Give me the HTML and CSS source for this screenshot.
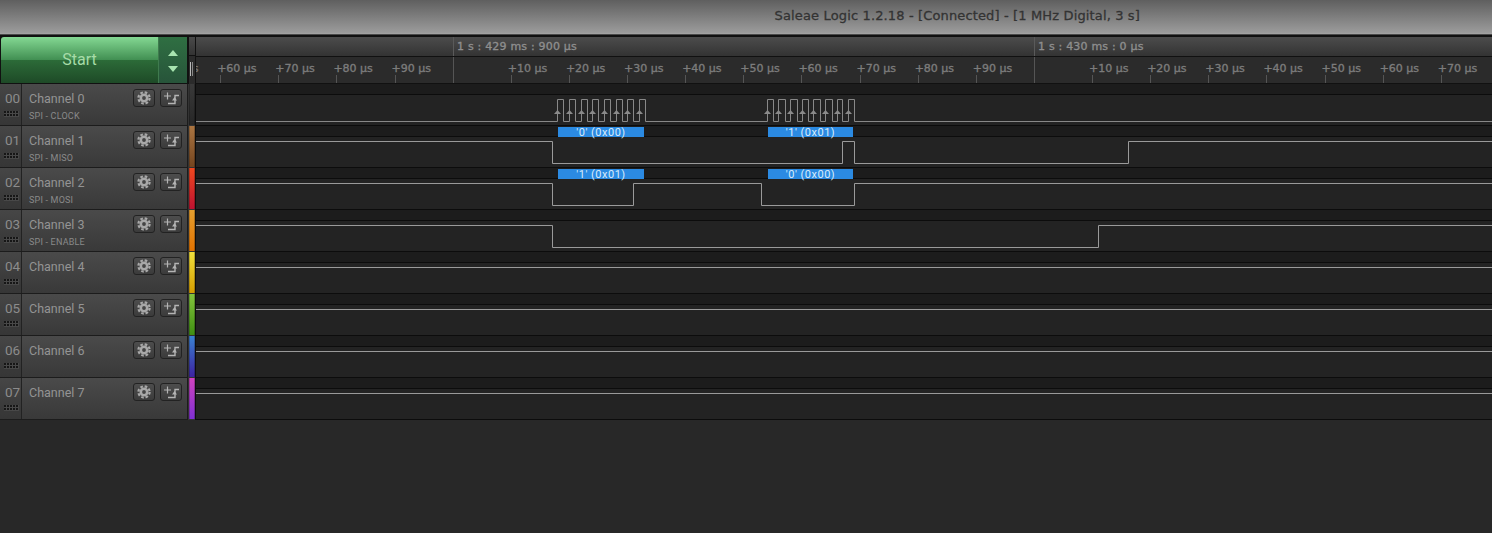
FILE: index.html
```html
<!DOCTYPE html>
<html>
<head>
<meta charset="utf-8">
<title>Saleae Logic 1.2.18</title>
<link rel="stylesheet" href="styles.css">
</head>
<body>

<svg class="defs">
  <symbol id="gear" viewBox="0 0 14 14">
    <circle cx="7" cy="7" r="3.2" fill="none" stroke="#a8a8a8" stroke-width="2.6"/>
    <circle cx="7" cy="7" r="5.6" fill="none" stroke="#a8a8a8" stroke-width="2.2" stroke-dasharray="2.6 1.8"/>
  </symbol>
  <symbol id="trig" viewBox="0 0 18 14">
    <path d="M2 5H9M5.5 1.5V8.5" fill="none" stroke="#b4b4b4" stroke-width="1.2"/>
    <path d="M6 12.5H13V4.5H17" fill="none" stroke="#b4b4b4" stroke-width="1.4"/>
    <path d="M12.5 6L15 9.5H10z" fill="#b4b4b4"/>
  </symbol>
</svg>

<div class="titlebar">Saleae Logic 1.2.18 - [Connected] - [1 MHz Digital, 3 s]</div>

<div class="top">
  <div class="start">
    <div class="start_btn">Start</div>
    <div class="start_arrows"><span class="up"></span><span class="down"></span></div>
  </div>
  <div class="top_strip"><div class="grip"></div></div>
  <div class="ruler">
    <div class="ruler_major">
      <div class="major first">1 s : 429 ms : 900 µs</div>
      <div class="major">1 s : 430 ms : 0 µs</div>
    </div>
    <div class="ruler_minor">
      <div class="tick">+50 µs</div>
      <div class="tick">+60 µs</div>
      <div class="tick">+70 µs</div>
      <div class="tick">+80 µs</div>
      <div class="tick">+90 µs</div>
      <div class="tick big"></div>
      <div class="tick">+10 µs</div>
      <div class="tick">+20 µs</div>
      <div class="tick">+30 µs</div>
      <div class="tick">+40 µs</div>
      <div class="tick">+50 µs</div>
      <div class="tick">+60 µs</div>
      <div class="tick">+70 µs</div>
      <div class="tick">+80 µs</div>
      <div class="tick">+90 µs</div>
      <div class="tick big"></div>
      <div class="tick">+10 µs</div>
      <div class="tick">+20 µs</div>
      <div class="tick">+30 µs</div>
      <div class="tick">+40 µs</div>
      <div class="tick">+50 µs</div>
      <div class="tick">+60 µs</div>
      <div class="tick">+70 µs</div>
    </div>
  </div>
</div>

<div class="row">
  <div class="chan">
    <div class="num">00<div class="dots"></div></div>
    <div class="info"><div class="name">Channel 0</div><div class="sub">SPI - CLOCK</div></div>
    <div class="btn"><svg class="gear"><use href="#gear"/></svg></div>
    <div class="btn"><svg class="trig"><use href="#trig"/></svg></div>
  </div>
  <div class="gutter"><div class="strip c0"></div></div>
  <div class="trace">
    <svg class="wave" width="1296" height="41">
      <path class="sig dim" d="M0 37.5H361.5V15.5H367.5V37.5H373.5V15.5H379.5V37.5H385.5V15.5H391.5V37.5H396.5V15.5H402.5V37.5H408.5V15.5H414.5V37.5H420.5V15.5H426.5V37.5H431.5V15.5H437.5V37.5H443.5V15.5H449.5V37.5H571.5V15.5H577.5V37.5H582.5V15.5H589.5V37.5H594.5V15.5H601.5V37.5H606.5V15.5H612.5V37.5H617.5V15.5H624.5V37.5H629.5V15.5H636.5V37.5H641.5V15.5H646.5V37.5H652.5V15.5H658.5V37.5H1296"/>
      <path class="edge" d="M361.5 26l3.5 4h-7zM373.5 26l3.5 4h-7zM385.5 26l3.5 4h-7zM396.5 26l3.5 4h-7zM408.5 26l3.5 4h-7zM420.5 26l3.5 4h-7zM431.5 26l3.5 4h-7zM443.5 26l3.5 4h-7zM571.5 26l3.5 4h-7zM582.5 26l3.5 4h-7zM594.5 26l3.5 4h-7zM606.5 26l3.5 4h-7zM617.5 26l3.5 4h-7zM629.5 26l3.5 4h-7zM641.5 26l3.5 4h-7zM652.5 26l3.5 4h-7z"/>
    </svg>
  </div>
</div>

<div class="row">
  <div class="chan">
    <div class="num">01<div class="dots"></div></div>
    <div class="info"><div class="name">Channel 1</div><div class="sub">SPI - MISO</div></div>
    <div class="btn"><svg class="gear"><use href="#gear"/></svg></div>
    <div class="btn"><svg class="trig"><use href="#trig"/></svg></div>
  </div>
  <div class="gutter"><div class="strip c1"></div></div>
  <div class="trace">
    <svg class="wave" width="1296" height="41">
      <rect class="bubble" x="362" y="1" width="86" height="10"/>
      <text class="bubble_text" x="405" y="9.5">'0' (0x00)</text>
      <rect class="bubble" x="572" y="1" width="85" height="10"/>
      <text class="bubble_text" x="614.5" y="9.5">'1' (0x01)</text>
      <path class="sig" d="M0 15.5H356.5V37.5H646.5V15.5H658.5V37.5H932.5V15.5H1296"/>
    </svg>
  </div>
</div>

<div class="row">
  <div class="chan">
    <div class="num">02<div class="dots"></div></div>
    <div class="info"><div class="name">Channel 2</div><div class="sub">SPI - MOSI</div></div>
    <div class="btn"><svg class="gear"><use href="#gear"/></svg></div>
    <div class="btn"><svg class="trig"><use href="#trig"/></svg></div>
  </div>
  <div class="gutter"><div class="strip c2"></div></div>
  <div class="trace">
    <svg class="wave" width="1296" height="41">
      <rect class="bubble" x="362" y="1" width="86" height="10"/>
      <text class="bubble_text" x="405" y="9.5">'1' (0x01)</text>
      <rect class="bubble" x="572" y="1" width="85" height="10"/>
      <text class="bubble_text" x="614.5" y="9.5">'0' (0x00)</text>
      <path class="sig" d="M0 15.5H356.5V37.5H437.5V15.5H565.5V37.5H658.5V15.5H1296"/>
    </svg>
  </div>
</div>

<div class="row">
  <div class="chan">
    <div class="num">03<div class="dots"></div></div>
    <div class="info"><div class="name">Channel 3</div><div class="sub">SPI - ENABLE</div></div>
    <div class="btn"><svg class="gear"><use href="#gear"/></svg></div>
    <div class="btn"><svg class="trig"><use href="#trig"/></svg></div>
  </div>
  <div class="gutter"><div class="strip c3"></div></div>
  <div class="trace">
    <svg class="wave" width="1296" height="41">
      <path class="sig" d="M0 15.5H356.5V37.5H902.5V15.5H1296"/>
    </svg>
  </div>
</div>

<div class="row">
  <div class="chan">
    <div class="num">04<div class="dots"></div></div>
    <div class="info"><div class="name">Channel 4</div></div>
    <div class="btn"><svg class="gear"><use href="#gear"/></svg></div>
    <div class="btn"><svg class="trig"><use href="#trig"/></svg></div>
  </div>
  <div class="gutter"><div class="strip c4"></div></div>
  <div class="trace">
    <svg class="wave" width="1296" height="41"><path class="sig" d="M0 15.5H1296"/></svg>
  </div>
</div>

<div class="row">
  <div class="chan">
    <div class="num">05<div class="dots"></div></div>
    <div class="info"><div class="name">Channel 5</div></div>
    <div class="btn"><svg class="gear"><use href="#gear"/></svg></div>
    <div class="btn"><svg class="trig"><use href="#trig"/></svg></div>
  </div>
  <div class="gutter"><div class="strip c5"></div></div>
  <div class="trace">
    <svg class="wave" width="1296" height="41"><path class="sig" d="M0 15.5H1296"/></svg>
  </div>
</div>

<div class="row">
  <div class="chan">
    <div class="num">06<div class="dots"></div></div>
    <div class="info"><div class="name">Channel 6</div></div>
    <div class="btn"><svg class="gear"><use href="#gear"/></svg></div>
    <div class="btn"><svg class="trig"><use href="#trig"/></svg></div>
  </div>
  <div class="gutter"><div class="strip c6"></div></div>
  <div class="trace">
    <svg class="wave" width="1296" height="41"><path class="sig" d="M0 15.5H1296"/></svg>
  </div>
</div>

<div class="row">
  <div class="chan">
    <div class="num">07<div class="dots"></div></div>
    <div class="info"><div class="name">Channel 7</div></div>
    <div class="btn"><svg class="gear"><use href="#gear"/></svg></div>
    <div class="btn"><svg class="trig"><use href="#trig"/></svg></div>
  </div>
  <div class="gutter"><div class="strip c7"></div></div>
  <div class="trace">
    <svg class="wave" width="1296" height="41"><path class="sig" d="M0 15.5H1296"/></svg>
  </div>
</div>

</body>
</html>
```

FILE: styles.css
```css
html, body { margin: 0; padding: 0; height: 533px; overflow: hidden; background-color: #282828; }
body { font-family: Roboto, sans-serif; }
.defs { display: block; width: 0; height: 0; }

.titlebar { height: 34px; box-sizing: border-box; padding: 7px 352px 0 0; text-align: right; font-family: "DejaVu Sans", sans-serif; font-size: 13px; letter-spacing: 0.14px; line-height: 17px; color: #333; -webkit-text-stroke: 0.3px #333; background: linear-gradient(#5f5f5f, #9c9c9c); border-bottom: 1px solid #a2a2a2; }

.top { display: grid; grid-template-columns: 188px 8px 1296px; height: 50px; box-sizing: border-box; padding-top: 2px; border-top: 1px solid #4a4a4a; background-color: #111; }
.start { display: flex; border-bottom: 1px solid #111; }
.start_btn { width: 157px; margin-left: 1px; box-sizing: border-box; border-radius: 3px 0 0 0; text-align: center; font-size: 16px; line-height: 46px; color: #a6dba8; background: linear-gradient(#84d893 0, #418f52 50%, #2c6b38 50%, #1e4a27 100%); }
.start_arrows { width: 29px; display: flex; flex-direction: column; align-items: center; gap: 10px; padding-top: 13px; box-sizing: border-box; background: linear-gradient(#2f6f42, #27543a); border-left: 1px solid #3f7a4e; }
.up { width: 0; height: 0; border: 5px solid transparent; border-top: 0; border-bottom: 6px solid #a8e4b0; }
.down { width: 0; height: 0; border: 5px solid transparent; border-bottom: 0; border-top: 6px solid #a8e4b0; }

.top_strip { margin-left: 1px; width: 6px; background: linear-gradient(#4a4a4a, #333 38%, #111 38%, #111 40%, #2b2b2b 40%); }
.grip { width: 3px; height: 14px; margin: 25px 0 0 1px; border-left: 1px solid #bbb; border-right: 1px solid #888; box-sizing: border-box; }

.ruler { overflow: hidden; border-left: 1px solid #111; margin-left: -1px; font-family: "DejaVu Sans", sans-serif; font-size: 11px; color: #7c7c7c; -webkit-text-stroke: 0.35px #7c7c7c; }
.ruler_major { display: flex; height: 19px; padding-left: 257px; background: linear-gradient(#4c4c4c, #333); border-bottom: 1px solid #111; }
.major { flex: 0 0 577px; padding: 2px 0 0 3px; line-height: 15px; letter-spacing: 0.2px; color: #8e8e8e; -webkit-text-stroke: 0.35px #8e8e8e; border-left: 1px solid #5a5a5a; }
.ruler_minor { display: flex; height: 27px; box-sizing: border-box; margin-left: -34px; background-color: #2b2b2b; border-bottom: 1px solid #111; }
.tick { flex: 0 0 58.14px; line-height: 24px; white-space: nowrap; text-indent: -3px; background: linear-gradient(#555, #555) left bottom / 1px 8px no-repeat; }
.big { background-size: 1px 100%; }

.row { display: grid; grid-template-columns: 188px 8px 1296px; height: 42px; background-color: #333; }

.chan { display: flex; align-items: flex-start; box-sizing: border-box; border-bottom: 1px solid #1c1c1c; border-right: 1px solid #1c1c1c; background: linear-gradient(#4a4a4a, #393939); }
.num { width: 22px; height: 41px; box-sizing: border-box; padding: 6px 0 0 5px; border-right: 1px solid #222; font-size: 13.5px; line-height: 17px; color: #8c8c8c; background-color: rgba(0,0,0,0.05); }
.dots { width: 15px; height: 6px; margin: 4px 0 0 -1px; background: linear-gradient(90deg, transparent 2px, #484848 2px) 0 0 / 3px 3px, linear-gradient(transparent 2px, #484848 2px) 0 0 / 3px 3px, #161616; }
.info { width: 104px; padding: 6px 0 0 7px; }
.name { font-size: 12.5px; line-height: 17px; color: #949494; white-space: nowrap; }
.sub { margin-top: 3px; font-size: 9px; line-height: 12px; letter-spacing: 0.2px; color: #8a8a8a; white-space: nowrap; }
.btn { width: 20px; height: 16px; margin: 5px 5px 0 0; display: flex; align-items: center; justify-content: center; border: 1px solid #222; border-radius: 3px; background: linear-gradient(#4d4d4d, #3b3b3b); }
.gear { width: 14px; height: 14px; }
.trig { width: 18px; height: 14px; }

.gutter { padding: 0 0 1px 1px; }
.strip { width: 6px; height: 41px; box-shadow: inset 1px 0 0 rgba(0,0,0,0.2), inset -1px 0 0 rgba(0,0,0,0.25); }
.c0 { background: linear-gradient(#3a3a3a, #262626); }
.c1 { background: linear-gradient(#ac7642, #74451f); }
.c2 { background: linear-gradient(#f0481f, #bd1231); }
.c3 { background: linear-gradient(#e5a02f, #e27200); }
.c4 { background: linear-gradient(#efe03c, #d69e00); }
.c5 { background: linear-gradient(#84c43c, #3f8f12); }
.c6 { background: linear-gradient(#3a82d2, #3d22a0); }
.c7 { background: linear-gradient(#d243c0, #7f30d2); }

.trace { height: 41px; border-bottom: 1px solid #0c0c0c; border-left: 1px solid #0c0c0c; margin-left: -1px; background: linear-gradient(#1c1c1c 0, #1c1c1c 10px, #0c0c0c 10px, #0c0c0c 11px, #232323 11px); }
.wave { display: block; }
.sig { fill: none; stroke: #9a9a9a; stroke-width: 1; }
.dim { stroke: #888; }
.edge { fill: #8a8a8a; }
.bubble { fill: #2b8ae2; }
.bubble_text { font-family: Roboto, sans-serif; font-size: 11px; letter-spacing: 0.5px; text-anchor: middle; fill: #d8ecfb; }
```
